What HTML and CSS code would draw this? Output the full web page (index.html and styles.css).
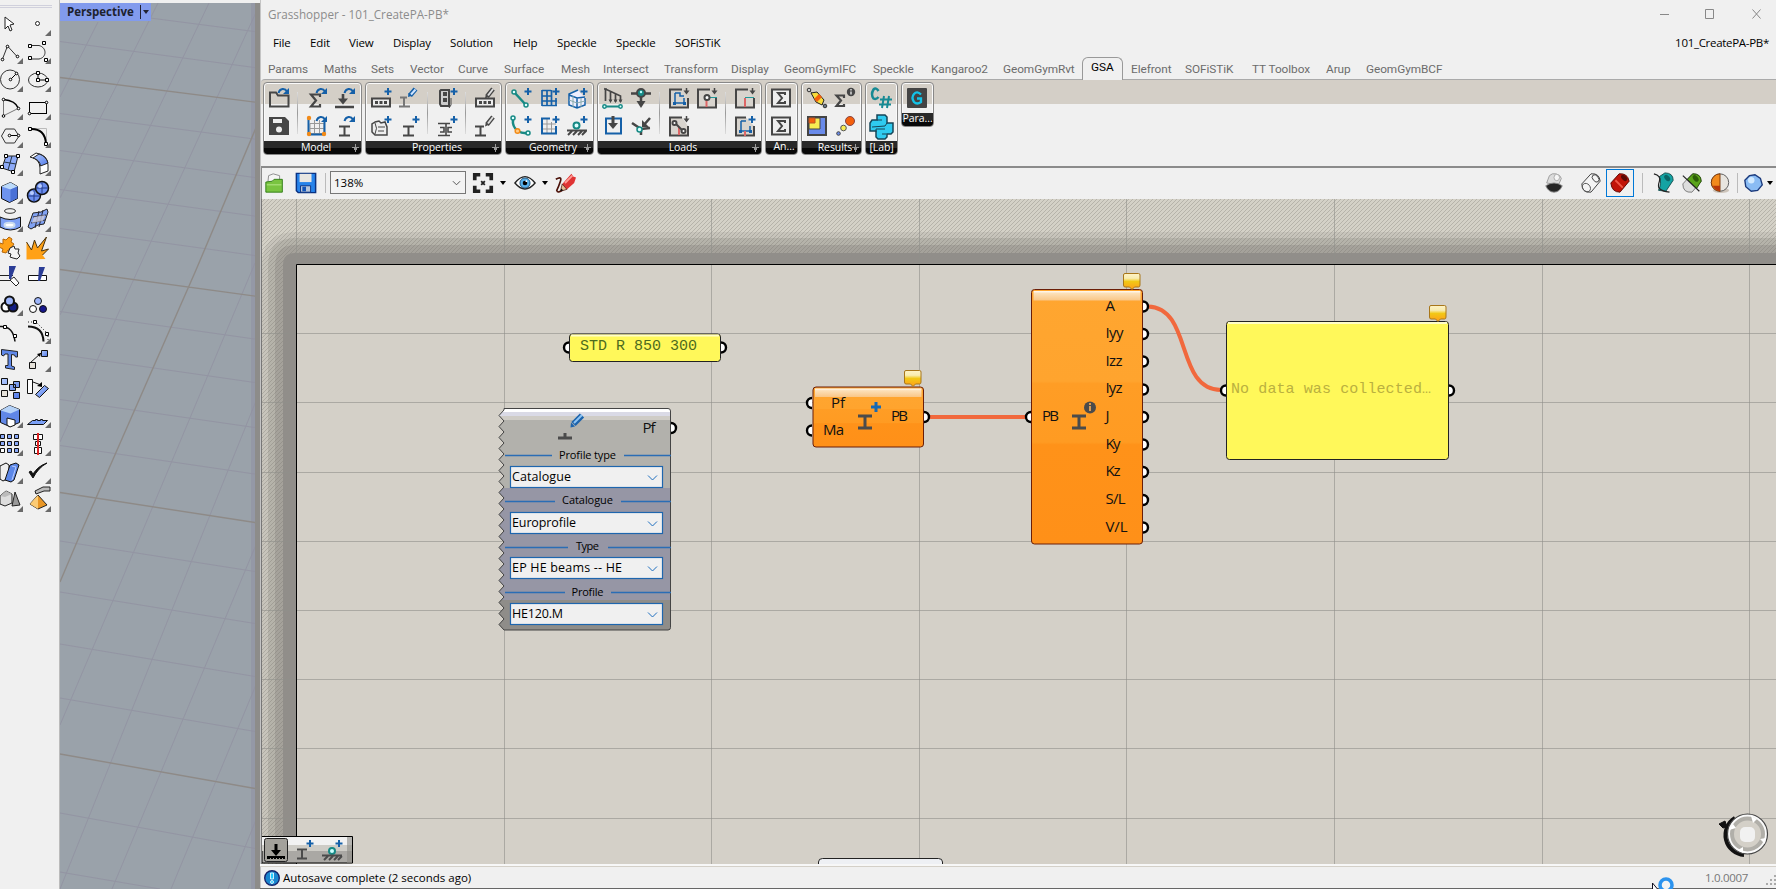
FILE: index.html
```html
<!DOCTYPE html>
<html lang="en">
<head>
<meta charset="utf-8">
<title>Grasshopper - 101_CreatePA-PB*</title>
<link rel="stylesheet" href="styles.css">
</head>
<body>
<svg class="defs" width="0" height="0">
  <defs>
    <symbol id="plus" viewBox="0 0 28 28" overflow="visible"><path d="M21 4v7M17.500 7.500h7" stroke="#1560a8" stroke-width="2" fill="none"/></symbol>
    <symbol id="redo" viewBox="0 0 28 28" overflow="visible"><path d="M13.500 9C15 4 20 4 22 7.500" stroke="#1560a8" stroke-width="2" fill="none"/><path d="M24 4v6h-6z" fill="#1560a8"/></symbol>
    <symbol id="beam" viewBox="0 0 28 28" overflow="visible"><path d="M8 14.500h11M8 23.500h11M13.500 14v9" stroke="#464646" stroke-width="2" fill="none"/></symbol>
    <symbol id="pen" viewBox="0 0 28 28" overflow="visible"><path d="M16 12.500l6-7.500" stroke="#464646" stroke-width="4.500"/><path d="M17 11.500l5-6.500" stroke="#ddd" stroke-width="2"/><path d="M14 14.500l.8-3.500 2.500 2z" fill="#464646"/></symbol>
    <symbol id="tri" viewBox="0 0 28 28"><path d="M27 21v6h-6z" fill="#6a6a6a"/></symbol>
    <symbol id="down" viewBox="0 0 28 28" overflow="visible"><path d="M21.500 4v4" stroke="#464646" stroke-width="1.500"/><path d="M18.500 6.500h6l-3 4z" fill="#464646"/></symbol>
    <linearGradient id="blue" x1="0" y1="0" x2="1" y2="1"><stop offset="0" stop-color="#b4ccff"/><stop offset="1" stop-color="#4f78e8"/></linearGradient>
    <linearGradient id="gold" x1="0" y1="0" x2="0" y2="1"><stop offset="0" stop-color="#fff3c4"/><stop offset=".3" stop-color="#f8ecb0"/><stop offset=".5" stop-color="#f2c816"/><stop offset="1" stop-color="#ff9d1a"/></linearGradient>
    <linearGradient id="orange" x1="0" y1="0" x2="0" y2="1"><stop offset="0" stop-color="#ffa630"/><stop offset=".36" stop-color="#ffa42e"/><stop offset=".37" stop-color="#ff9d25"/><stop offset=".6" stop-color="#ff9b22"/><stop offset=".61" stop-color="#ff9219"/><stop offset="1" stop-color="#ff9018"/></linearGradient>
    <linearGradient id="gloss" x1="0" y1="0" x2="0" y2="1"><stop offset="0" stop-color="#fff" stop-opacity=".95"/><stop offset=".25" stop-color="#fce0b8"/><stop offset="1" stop-color="#f9c687"/></linearGradient>
  </defs>
</svg>
<div class="desktop">
  <aside class="toolbox">
    <div class="grab"></div>
    <div class="tools">
      <svg viewBox="0 0 28 28"><path d="M9 8v12l3-3 2 5 2-1-2-5 4-1z" fill="#fff" stroke="#222"/></svg>
      <svg viewBox="0 0 28 28"><circle cx="13.500" cy="14.500" r="2" fill="#fff" stroke="#222"/><use href="#tri"/></svg>
      <svg viewBox="0 0 28 28"><path d="M6.500 22l5-13 10 11" fill="none" stroke="#333"/><g fill="#fff" stroke="#000"><circle cx="6.500" cy="22.500" r="1.300"/><circle cx="11.500" cy="9.500" r="1.300"/><circle cx="21.500" cy="19.500" r="1.300"/></g><use href="#tri"/></svg>
      <svg viewBox="0 0 28 28"><path d="M6 8.500h9c8 2 8 12 0 13.500H6" fill="none" stroke="#333"/><g fill="#fff" stroke="#000"><path d="M4.500 7.500h3v3h-3zM4.500 19.500h3v3h-3zM18.500 4.500h3v3h-3zM20.500 21.500h3v3h-3z"/></g><use href="#tri"/></svg>
      <svg viewBox="0 0 28 28"><circle cx="14" cy="14.500" r="9.500" fill="none" stroke="#333"/><path d="M14.500 14.500l6-6" stroke="#000"/><g fill="#fff" stroke="#000"><circle cx="14.500" cy="14.500" r="1.300"/><circle cx="20.500" cy="8.500" r="1.300"/></g><use href="#tri"/></svg>
      <svg viewBox="0 0 28 28"><ellipse cx="14" cy="15" rx="9.500" ry="7" fill="none" stroke="#333"/><path d="M14 8v7h8" stroke="#000" fill="none"/><g fill="#fff" stroke="#000"><path d="M12.500 6.500h3v3h-3zM12.500 13.500h3v3h-3zM21.500 13.500h3v3h-3z"/></g><use href="#tri"/></svg>
      <svg viewBox="0 0 28 28"><path d="M7.500 22V6.500" stroke="#777"/><path d="M7.500 6.500q12 1 15 9" fill="none" stroke="#000" stroke-width="1.500"/><path d="M22 15.500l-14 7" stroke="#777"/><g fill="#fff" stroke="#000"><circle cx="7.500" cy="6.500" r="1.300"/><circle cx="22.500" cy="15.500" r="1.300"/><circle cx="7.500" cy="23" r="1.300"/></g><use href="#tri"/></svg>
      <svg viewBox="0 0 28 28"><rect x="5.500" y="9.500" width="17" height="11" fill="none" stroke="#000"/><g fill="#fff" stroke="#000"><circle cx="22.500" cy="9.500" r="1.300"/><circle cx="5.500" cy="20.500" r="1.300"/></g><use href="#tri"/></svg>
      <svg viewBox="0 0 28 28"><path d="M9.500 8h9l4.500 7-4.500 7h-9L5.500 15z" fill="none" stroke="#333"/><path d="M13 14.500h9" stroke="#000"/><g fill="#fff" stroke="#000"><circle cx="13.500" cy="14.500" r="1.300"/><circle cx="22.500" cy="14.500" r="1.300"/></g><use href="#tri"/></svg>
      <svg viewBox="0 0 28 28"><path d="M6 7.500h16.500v15" fill="none" stroke="#bbb"/><path d="M6 8q15-1 16 15" fill="none" stroke="#000" stroke-width="2"/><path d="M4.500 6.500h3v3h-3zM20.500 21.500h3v3h-3z" fill="#fff" stroke="#000"/><use href="#tri"/></svg>
      <svg viewBox="0 0 28 28"><path d="M10 7h12l-4 16-12-4z" fill="#8daaf8" stroke="#222"/><path d="M8 13l12 2M16 7l-4 14" stroke="#234"/><path d="M8.500 5.500h3v3h-3zM20.500 5.500h3v3h-3zM4.500 16.500h3v3h-3zM15.500 21.500h3v3h-3z" fill="#fff" stroke="#000"/><use href="#tri"/></svg>
      <svg viewBox="0 0 28 28"><path d="M6 8l6-4q12 2 12 12v6l-8 3v-6q0-9-10-11z" fill="#fff" stroke="#222"/><path d="M9 9q7 2 7.500 8l7.500-3q-2-7-9-9z" fill="url(#blue)" stroke="#222"/><use href="#tri"/></svg>
      <svg viewBox="0 0 28 28"><path d="M5.500 9.500l9-4 7 4v12l-8 4-8-4z" fill="#6e93ee" stroke="#111"/><path d="M5.500 9.500l9-4 7 4-7 3z" fill="#bcdafa"/><path d="M14.500 12.500v12.500l7-4V9.500z" fill="#4970d6"/><use href="#tri"/></svg>
      <svg viewBox="0 0 28 28"><g fill="#6b8ef0" stroke="#111" stroke-width="1.500"><circle cx="10" cy="18.500" r="6.500"/><circle cx="18" cy="11" r="6.500"/></g><path d="M4 19h12M10 12v13M12 11h12M18 5v12" stroke="#223a88" fill="none"/><circle cx="16" cy="9" r="2" fill="#b8ccff"/><circle cx="8" cy="16" r="2" fill="#b8ccff"/><use href="#tri"/></svg>
      <svg viewBox="0 0 28 28"><ellipse cx="14" cy="6" rx="5.500" ry="2.300" fill="none" stroke="#333"/><path d="M4 12q10 5 20.500 0v10q-10 6-20.500 0z" fill="#7fa2f5" stroke="#111"/><ellipse cx="13.500" cy="20" rx="5" ry="2.300" fill="#fff" stroke="#cde" stroke-width="2"/><use href="#tri"/></svg>
      <svg viewBox="0 0 28 28"><path d="M9 8l8-1 6-3 1 3-4 12-6 1-7 4-3-2z" fill="#80a1f2" stroke="#222"/><path d="M9 12l13-2M7 18l14-3M15 6l-4 17M19 5l-4 17" stroke="#223"/><path d="M10 12l11-2-2 6-11 2z" fill="#ccd" opacity=".8"/><use href="#tri"/></svg>
      <svg viewBox="0 0 28 28"><path d="M7 6l3 1 3-3 3 2-1 3 3 2-3 4 2 3-5-1-2 3-4-1 1-3-4-2 1-4 3 1z" fill="#ffa116" stroke="#b5670a"/><path d="M14 15l4-2 1 3 4 0-1 4 2 3-3 3-4-1-3-1 1-3-3-1z" fill="#f4f4f4" stroke="#222"/></svg>
      <svg viewBox="0 0 28 28"><path d="M2.500 26.500V9l5 8 3-10 3 8 9-11-5 14 7-2-6 6 3 4z" fill="#ffa116"/><path d="M2.500 9l5 8 3-10 3 8 9-11-5 14 7-2-6 6" fill="none" stroke="#46300c"/></svg>
      <svg viewBox="0 0 28 28"><path d="M4 14.500h13M4 19.500h10M14 19l4-3 5 6-3 3z" fill="#fff" stroke="#222"/><path d="M13 5h7l-5 13h-2z" fill="#2b3d96"/></svg>
      <svg viewBox="0 0 28 28"><path d="M4.500 14.500h18v5h-18z" fill="#fff" stroke="#111"/><path d="M15 6h6l-5 14h-2z" fill="#2b3d96"/></svg>
      <svg viewBox="0 0 28 28"><g stroke="#111" stroke-width="2"><circle cx="10" cy="18" r="4.500" fill="#fff"/><circle cx="17" cy="18" r="4.500" fill="#121e82"/><circle cx="13.500" cy="12" r="4.500" fill="#9db5fa"/></g><use href="#tri"/></svg>
      <svg viewBox="0 0 28 28"><g stroke="#111"><circle cx="9" cy="20" r="3.500" fill="#fff"/><circle cx="19" cy="20" r="3.500" fill="#16168c"/><circle cx="14" cy="12" r="3.500" fill="#9db5fa"/></g></svg>
      <svg viewBox="0 0 28 28"><path d="M4 9.500q13-1 15 15" fill="none" stroke="#111" stroke-width="1.500"/><path d="M7.500 8.500h3v3h-3zM17.500 17.500h3v3h-3z" fill="#fff" stroke="#000"/></svg>
      <svg viewBox="0 0 28 28"><path d="M4 9.500q15 0 15.500 15" fill="none" stroke="#111" stroke-width="2"/><path d="M4 5h8l12 12v8" fill="none" stroke="#222" stroke-dasharray="1 2"/><path d="M9.500 3.500h3v3h-3zM21.500 15.500h3v3h-3z" fill="#fff" stroke="#000"/><use href="#tri"/></svg>
      <svg viewBox="0 0 28 28"><path d="M5.500 4.500l16 2v5.500h-2l-1-2-3-.5V21l3 1v2.500l-9-1.500v-2.500l2.500 0V9l-3 0-1.500 2-2-1z" fill="#6088e8" stroke="#222"/></svg>
      <svg viewBox="0 0 28 28"><path d="M6 18l11-10" stroke="#111"/><path d="M17 8l-4 1 3 3z"/><path d="M5.500 17.500h6v6h-6z" fill="#e6e2da" stroke="#111"/><path d="M17.500 5.500h6v6h-6z" fill="url(#blue)" stroke="#111"/><use href="#tri"/></svg>
      <svg viewBox="0 0 28 28"><g fill="url(#blue)" stroke="#111"><path d="M5.500 5.500h6v6h-6zM17.500 8.500h6v6h-6zM13.500 11.500h6v6h-6zM17.500 19.500h6v6h-6z"/></g><path d="M5.500 17.500h6v6h-6z" fill="#e6e2da" stroke="#111"/></svg>
      <svg viewBox="0 0 28 28"><path d="M3.500 6.500h5v14h-5z" fill="#fff" stroke="#111"/><path d="M9 9l8 3" stroke="#111"/><path d="M18 9v5l-5-1z"/><path d="M20.500 12.500l4 3-9 9-4-3z" fill="url(#blue)" stroke="#111"/></svg>
      <svg viewBox="0 0 28 28"><path d="M4.500 9.500l9-5 10 4v13l-10 4-9-4z" fill="#6087e6" stroke="#111"/><path d="M4.500 9.500l9-5 10 4-9 4z" fill="#b5d2f7"/><path d="M11 17l8 2v5l-5 2-3-2z" fill="#fff" stroke="#111"/><use href="#tri"/></svg>
      <svg viewBox="0 0 28 28"><path d="M3.500 23.500l5-4h3v-1h2v1h3v-1h2v1h5l-4 4z" fill="#7ba0f6" stroke="#111"/><use href="#tri"/></svg>
      <svg viewBox="0 0 28 28"><g fill="#89a8f7" stroke="#111"><path d="M4.500 5.500h4v4h-4zM11.500 5.500h4v4h-4zM18.500 5.500h4v4h-4zM4.500 12.500h4v4h-4zM11.500 12.500h4v4h-4zM18.500 12.500h4v4h-4zM11.500 19.500h4v4h-4zM18.500 19.500h4v4h-4z"/><path d="M4.500 19.500h4v4h-4z" fill="#fff"/></g><use href="#tri"/></svg>
      <svg viewBox="0 0 28 28"><path d="M9.500 5.500h9v5h-9zM11.500 12.500h5v4h-5zM10.500 18.500h7v6h-7z" fill="#fff" stroke="#111"/><path d="M14 4v22" stroke="#d22" stroke-width="2"/><use href="#tri"/></svg>
      <svg viewBox="0 0 28 28"><path d="M4 9l6-3 3 2v13l-6 3-3-2z" fill="#eee" stroke="#111"/><path d="M14 8l6-2 3 2-5 15-3 2-6-2z" fill="#5c87e8" stroke="#111"/><path d="M16 9l4 1-4 13" fill="none" stroke="#b8ccff"/><use href="#tri"/></svg>
      <svg viewBox="0 0 28 28"><path d="M5 15l4 6Q14 11 23 6q-9 3-14 11l-2-3z" fill="#111" stroke="#111"/><use href="#tri"/></svg>
      <svg viewBox="0 0 28 28"><path d="M4 11l6-5 6 3v9l-7 3-5-2z" fill="#ddd" stroke="#222"/><path d="M19 7l5 13-8 1z" fill="#999" stroke="#222"/><path d="M4 11l6-5 6 3-7 3z" fill="#bbb"/><use href="#tri"/></svg>
      <svg viewBox="0 0 28 28"><path d="M14 10l9 10-9 4-8-5z" fill="#e89626" stroke="#222"/><path d="M14 10l-8 9 8 5z" fill="#fbcb75"/><path d="M11 6l8-4h7v4h-6l-8 3z" fill="#bbb" stroke="#222"/><use href="#tri"/></svg>
    </div>
  </aside>

  <section class="viewport">
    <svg class="plane" viewBox="60 3 195 886">
      <g class="minor">
        <path d="M150 18L258 32M60 41.500L258 68M60 113.500L258 139.500M60 150.500L258 178M60 189.500L258 216.500M60 228.500L258 256M60 311.500L258 339.500M60 354.500L258 383M60 399.500L258 428M60 445.500L258 474.500M60 541L258 572M60 592L258 624M60 644L258 677M60 698L258 732M60 813L258 849M60 872L160 889"/>
        <path d="M98 22L60 97M158 3L60 198M209 3L60 315M258 8L138 270L60 442M255 263L143 530L60 725M258 396L204 530L60 889M258 540L112 889M258 680L171 889M258 815L228 889"/>
      </g>
      <path class="major" d="M60 77.500L258 102.500M60 269.500L258 296.500M60 492.500L258 523M60 754L258 789M258 123L196 270L82 530L60 582"/>
    </svg>
    <div class="view-label"><span>Perspective</span><i></i></div>
  </section>

  <main class="window">
    <header class="titlebar">
      <span>Grasshopper - 101_CreatePA-PB*</span>
      <svg viewBox="0 0 104 12"><path d="M1 6.500h9M46.500 1.500h8v9h-8zM93.500 1.500l8 9M101.500 1.500l-8 9" fill="none" stroke="#888"/></svg>
    </header>
    <nav class="menu">
      <span>File</span><span>Edit</span><span>View</span><span>Display</span><span>Solution</span><span>Help</span><span>Speckle</span><span>Speckle</span><span>SOFiSTiK</span><span class="doc">101_CreatePA-PB*</span>
    </nav>
    <nav class="tabs">
      <span>Params</span><span>Maths</span><span>Sets</span><span>Vector</span><span>Curve</span><span>Surface</span><span>Mesh</span><span>Intersect</span><span>Transform</span><span>Display</span><span>GeomGymIFC</span><span>Speckle</span><span>Kangaroo2</span><span>GeomGymRvt</span><span class="active">GSA</span><span>Elefront</span><span>SOFiSTiK</span><span>TT Toolbox</span><span>Arup</span><span>GeomGymBCF</span>
    </nav>

    <section class="ribbon">
      <div class="panel">
        <div class="icons">
          <div class="group one">
            <svg viewBox="0 0 28 28"><path d="M5 22.500V8.500h6l2 3h10.500v11H5z" fill="none" stroke="#464646" stroke-width="2"/><use href="#redo"/></svg>
            <svg viewBox="0 0 28 28"><path d="M4 5h16l4 4v14H4z" fill="#464646"/><path d="M8 7h9v4H8z" fill="#eee"/><circle cx="14" cy="17.500" r="3" fill="#eee"/></svg>
          </div>
          <i class="sep"></i>
          <div class="group two">
            <svg viewBox="0 0 28 28"><path d="M17 13v-2.500H8l5 6-5 6h9V20" fill="none" stroke="#464646" stroke-width="2.200"/><use href="#redo"/></svg>
            <svg viewBox="0 0 28 28"><path d="M4 23h19M12 10v7" stroke="#464646" stroke-width="2.600"/><path d="M7 14.500h10l-5 6z" fill="#464646"/><use href="#redo"/></svg>
            <svg viewBox="0 0 28 28"><path d="M7 11.500h14v10H7zM7 16.500h14M11.500 8v15M16.500 8v15" fill="none" stroke="#999"/><path d="M5.500 6v17M21.500 10v12M5 22.500h17" stroke="#1560a8" stroke-width="2"/><g fill="#f28a17"><circle cx="6" cy="6" r="2.200"/><circle cx="6" cy="22" r="2.200"/><circle cx="21" cy="22" r="2.200"/></g><use href="#redo"/></svg>
            <svg viewBox="0 0 28 28"><use href="#beam"/><use href="#redo"/></svg>
          </div>
        </div>
        <footer><b>Model</b><em></em></footer>
      </div>
      <div class="panel">
        <div class="icons">
          <div class="group two">
            <svg viewBox="0 0 28 28"><path d="M5 14.500h18v8H5z" fill="#eee" stroke="#464646" stroke-width="2"/><path d="M8 17h3v3H8zM12.500 17h3v3h-3zM17 17h3v3h-3z" fill="#464646"/><use href="#plus"/></svg>
            <svg viewBox="0 0 28 28"><path d="M5 13.500h7M9 14v8M4 22.500h11" stroke="#777" stroke-width="2"/><path d="M15 11.500L20.500 5" stroke="#1560a8" stroke-width="5"/><path d="M16 10.500L20.500 5.500" stroke="#cfe4ff" stroke-width="2"/><path d="M13 13l.5-4 3 3z" fill="#1560a8"/></svg>
            <svg viewBox="0 0 28 28"><path d="M8 10l-3 2v8l3 3h12v-8l-2-5-4 1-2-2z" fill="#eee" stroke="#464646" stroke-width="1.500"/><path d="M8 11q3 5 0 11M11 15h7M11 19h6" fill="none" stroke="#464646"/><use href="#plus"/></svg>
            <svg viewBox="0 0 28 28"><use href="#beam"/><use href="#plus"/></svg>
          </div>
          <i class="sep"></i>
          <div class="group one">
            <svg viewBox="0 0 28 28"><path d="M8 6h8v16H8l-1-2V7z" fill="#ccc" stroke="#464646" stroke-width="2"/><path d="M10 8h4v4h-4zM10 14h4v4h-4z" fill="#464646"/><path d="M18 14v7l-2 3" stroke="#464646" fill="none"/><use href="#plus"/></svg>
            <svg viewBox="0 0 28 28"><path d="M5 11.500h12M5 23.500h12M7 15.500h4v4.500H7M19 15.500h-4v4.500h4" stroke="#464646" stroke-width="1.600" fill="none"/><path d="M13 12v11" stroke="#464646" stroke-width="1.600"/><use href="#plus"/></svg>
          </div>
          <i class="sep"></i>
          <div class="group one">
            <svg viewBox="0 0 28 28"><path d="M5 14.500h18v8H5z" fill="#eee" stroke="#464646" stroke-width="2"/><path d="M8 17h3v3H8zM12.500 17h3v3h-3zM17 17h3v3h-3z" fill="#464646"/><use href="#pen"/></svg>
            <svg viewBox="0 0 28 28"><path d="M4 14.500h9M4 23.500h11M9.500 14v9" stroke="#464646" stroke-width="2"/><use href="#pen"/></svg>
          </div>
        </div>
        <footer><b>Properties</b><em></em></footer>
      </div>
      <div class="panel">
        <div class="icons">
          <div class="group three">
            <svg viewBox="0 0 28 28"><path d="M7 8l12 13" stroke="#178a85" stroke-width="2.500"/><g fill="#dff" stroke="#178a85" stroke-width="1.500"><circle cx="7" cy="8" r="2"/><circle cx="19" cy="21" r="2"/></g><use href="#plus"/></svg>
            <svg viewBox="0 0 28 28"><path d="M7 6.500h9M7 12h9M7 17h15M7 21.500h15M7 6v16M12 6v16M16.500 6v16M21 14v8" stroke="#1560a8" stroke-width="1.700" fill="none"/><use href="#plus"/></svg>
            <svg viewBox="0 0 28 28"><path d="M15 6l-9 4v11l8 3 8-3v-7M6 11l8 3 8-1M14 14v10" fill="#eef" stroke="#1560a8" stroke-width="1.500"/><path d="M6 16l8 3 8-2M10 12v11M18 14v9" stroke="#8aa" fill="none"/><use href="#plus"/></svg>
            <svg viewBox="0 0 28 28"><path d="M6 7q-1 8 5 12 4 3 12 2" fill="none" stroke="#178a85" stroke-width="2.500"/><g fill="#dff" stroke="#178a85" stroke-width="1.500"><circle cx="6" cy="6" r="2"/><circle cx="21" cy="21" r="2"/></g><circle cx="10.500" cy="19" r="2.300" fill="#fc8" stroke="#f28a17" stroke-width="1.500"/><use href="#plus"/></svg>
            <svg viewBox="0 0 28 28"><path d="M8 12h13M8 17h13M12 6v16M16.500 10v12" stroke="#999"/><path d="M15 6.500H7v15h14V14" stroke="#1560a8" stroke-width="2" fill="none"/><use href="#plus"/></svg>
            <svg viewBox="0 0 28 28"><path d="M4 18.500h20M9 19l-4 4M14 19l-4 4M19 19l-4 4M23 19l-4 4" stroke="#464646" stroke-width="2"/><circle cx="13.500" cy="13.500" r="3" fill="#dff" stroke="#178a85" stroke-width="2"/><use href="#plus"/></svg>
          </div>
        </div>
        <footer><b>Geometry</b><em></em></footer>
      </div>
      <div class="panel">
        <div class="icons">
          <div class="group two">
            <svg viewBox="0 0 28 28"><path d="M6.500 17V5L21.500 12v6M11.500 8v9M16.500 10v8M5 5h3" fill="none" stroke="#464646" stroke-width="1.700"/><path d="M9.500 15.500h4l-2 3.500zM14.500 15.500h4l-2 3.500zM19.500 15.500h4l-2 3.500z" fill="#464646"/><path d="M6 22.500h15" stroke="#178a85" stroke-width="2"/><g fill="#dff" stroke="#178a85" stroke-width="1.500"><circle cx="5.500" cy="22.500" r="1.700"/><circle cx="21.500" cy="22.500" r="1.700"/></g></svg>
            <svg viewBox="0 0 28 28"><path d="M4 9.500h20M14 11v8" stroke="#464646" stroke-width="2.500"/><path d="M9.500 17h9l-4.500 7z" fill="#464646"/><circle cx="14" cy="9" r="4" fill="#178a85" stroke="#464646" stroke-width="2"/><circle cx="14" cy="8" r="1.200" fill="#bff"/></svg>
            <svg viewBox="0 0 28 28"><path d="M7 6.500h15v15H7z" fill="none" stroke="#1560a8" stroke-width="2"/><path d="M14 4v8" stroke="#464646" stroke-width="3"/><path d="M9 11h10l-5 6z" fill="#464646"/></svg>
            <svg viewBox="0 0 28 28"><path d="M5 11l9 6 9-1M14 17v6M16 14l7-8" stroke="#464646" stroke-width="2.500" fill="none"/><path d="M15 8v7h7z" fill="#464646"/><circle cx="12.500" cy="17.500" r="2.500" fill="#dff" stroke="#178a85" stroke-width="1.500"/></svg>
          </div>
          <i class="sep"></i>
          <div class="group two">
            <svg viewBox="0 0 28 28"><path d="M17 5.500H5v18h18V14" stroke="#464646" stroke-width="2" fill="#d8d4ce"/><path d="M10 9v10h9v-5M10 9h5v3h4" fill="none" stroke="#1560a8" stroke-width="1.500"/><path d="M8 18h3v3H8zM18 18h3v3h-3z" fill="#1560a8"/><use href="#down"/></svg>
            <svg viewBox="0 0 28 28"><path d="M17 5.500H5v18h18V14" stroke="#464646" stroke-width="2" fill="#d8d4ce"/><path d="M13.500 15v8" stroke="#d66" stroke-width="2"/><path d="M15 13.500h9" stroke="#299"/><circle cx="14" cy="13.500" r="2.500" fill="#fff" stroke="#464646" stroke-width="2"/><use href="#down"/></svg>
            <svg viewBox="0 0 28 28"><path d="M17 5.500H5v18h18V14" stroke="#464646" stroke-width="2" fill="#d8d4ce"/><path d="M14 15v8" stroke="#d66" stroke-width="2"/><path d="M10 11l8 8" stroke="#464646" stroke-width="2"/><g fill="#fff" stroke="#464646" stroke-width="2"><circle cx="9.500" cy="11" r="2"/><circle cx="18.500" cy="19" r="2"/></g><use href="#down"/></svg>
          </div>
          <i class="sep"></i>
          <div class="group one">
            <svg viewBox="0 0 28 28"><path d="M17 5.500H5v18h18V14" stroke="#464646" stroke-width="2" fill="#d8d4ce"/><path d="M14 14v9" stroke="#d66" stroke-width="2"/><path d="M14 13.500h9" stroke="#299"/><use href="#down"/></svg>
            <svg viewBox="0 0 28 28"><path d="M15 5.500H5v18h18V14" stroke="#464646" stroke-width="2" fill="#d8d4ce"/><path d="M10 9v10h9v-5M10 9h5" fill="none" stroke="#1560a8" stroke-width="1.500"/><path d="M14 19v5" stroke="#d66" stroke-width="2"/><path d="M8 18h3v3H8zM18 18h3v3h-3z" fill="#1560a8"/><use href="#plus"/></svg>
          </div>
        </div>
        <footer><b>Loads</b><em></em></footer>
      </div>
      <div class="panel">
        <div class="icons">
          <div class="group one">
            <svg viewBox="0 0 28 28"><path d="M5 5.500h18v17H5z" fill="#eee" stroke="#464646" stroke-width="2"/><path d="M18 11V9h-7l4 5-4 5h7v-2" fill="none" stroke="#464646" stroke-width="2"/></svg>
            <svg viewBox="0 0 28 28"><path d="M5 5.500h18v17H5z" fill="#eee" stroke="#464646" stroke-width="2"/><path d="M18 11V9h-7l4 5-4 5h7v-2" fill="none" stroke="#464646" stroke-width="2"/></svg>
          </div>
        </div>
        <footer class="cut"><b>An…</b></footer>
      </div>
      <div class="panel">
        <div class="icons">
          <div class="group two">
            <svg viewBox="0 0 28 28"><path d="M6 6l16 17" stroke="#555"/><path d="M8 9l6-1 7 8-2 5-6-3z" fill="#f7dc3c" stroke="#222"/><path d="M11 15l5-5 3 3-5 5z" fill="#f4600c"/><circle cx="6" cy="6" r="1.800" fill="#ccc" stroke="#333"/><circle cx="22" cy="22" r="1.800" fill="#678" stroke="#333"/></svg>
            <svg viewBox="0 0 28 28"><path d="M13 14v-2.500H5.500l4.500 5-4.500 5.500H13V20" fill="none" stroke="#464646" stroke-width="2.200"/><circle cx="20" cy="8" r="4.200" fill="#464646"/><path d="M20 7.500v3M20 5v1.500" stroke="#ddd" stroke-width="1.500"/></svg>
            <svg viewBox="0 0 28 28"><path d="M5 5h18v18H5z" fill="#6a8bea" stroke="#444" stroke-width="2"/><path d="M6 6h11v11H6z" fill="#f7ec52" stroke="#444"/><path d="M6 6h6v5H6z" fill="#f4600c" stroke="#b52"/></svg>
            <svg viewBox="0 0 28 28"><circle cx="19" cy="9" r="4.500" fill="#f4600c" stroke="#844"/><circle cx="12.500" cy="16" r="2.800" fill="#f7ec52" stroke="#555"/><circle cx="7.500" cy="21.500" r="1.800" fill="#6a8bea" stroke="#444"/></svg>
          </div>
        </div>
        <footer><b>Results</b><em></em></footer>
      </div>
      <div class="panel">
        <div class="icons">
          <div class="group one">
            <svg viewBox="0 0 28 28"><path d="M11.500 7Q9 3 6.500 5.500q-3 5 0 9Q9 16 11.500 13" fill="none" stroke="#178a94" stroke-width="2.500"/><path d="M17 12l-2 12M22 12l-2 12M13 15.500h12M12 20.500h12" stroke="#178a94" stroke-width="2"/></svg>
            <svg viewBox="0 0 28 28"><path d="M10 3h8l2 2v6h6v9l-2 2h-4v3l-2 2h-7l-2-2v-6H3v-8l2-3h5z" fill="#2fcbf0" stroke="#164658" stroke-width="1.500"/><path d="M10 8h5M15 22h4M5 15l13-1 2-3M9 20v-3h9" fill="none" stroke="#164658"/></svg>
          </div>
        </div>
        <footer class="fill"><b>[Lab]</b></footer>
      </div>
      <div class="panel short">
        <div class="icons">
          <div class="group one">
            <svg viewBox="0 0 28 28"><rect x="4" y="4" width="20" height="20" rx="1" fill="#444"/><path d="M18 10.500Q14 6.500 11 10t0 8q3 3 7 0v-3.500h-4" fill="none" stroke="#13c3e8" stroke-width="2.300"/></svg>
          </div>
        </div>
        <footer class="cut"><b>Para…</b></footer>
      </div>
    </section>

    <section class="toolbar">
      <svg class="ic" viewBox="0 0 24 24"><path d="M5 4l5-2 7 2v10H4z" fill="#f5f5f5" stroke="#888"/><path d="M2 11l7-1 2-2h9v14H2z" fill="#79c440" stroke="#2c7a14"/><path d="M3 14h16" stroke="#b9ea8c"/></svg>
      <svg class="ic" viewBox="0 0 24 24"><path d="M1.500 1.500h21v21h-19l-2-2z" fill="#2783ea" stroke="#0a3282" stroke-width="1.600"/><path d="M5 2h13v9H5z" fill="#e8e6e2"/><path d="M6 15h11v7H6z" fill="#b8c6da" stroke="#0a3282"/><path d="M8 16h4v5H8z" fill="#1254b8"/></svg>
      <i class="bar"></i>
      <div class="combo"><span>138%</span><svg viewBox="0 0 10 6"><path d="M1 1l4 4 4-4" fill="none" stroke="#444"/></svg></div>
      <svg class="ic fit" viewBox="0 0 24 24"><path d="M3 9V3h6M15 3h6v6M21 15v6h-6M9 21H3v-6" fill="none" stroke="#222" stroke-width="4"/><path d="M10 10l4 4M14 10l-4 4" stroke="#222" stroke-width="2"/></svg>
      <i class="drop"></i>
      <svg class="ic" viewBox="0 0 24 24"><path d="M1 12q11-14 22 0-11 13-22 0z" fill="#fff" stroke="#222" stroke-width="1.500"/><circle cx="12" cy="12" r="5.500" fill="#58b0ea" stroke="#1a4a72"/><circle cx="12" cy="12" r="2.500"/><circle cx="13.500" cy="10" r="1" fill="#fff"/></svg>
      <i class="drop"></i>
      <svg class="ic brush" viewBox="0 0 24 24"><path d="M2 8q7-4 5 2t-4 10q1 4 7-1" fill="none" stroke="#4a1008" stroke-width="1.800"/><path d="M9 13l10-11 2 3 3 1-2 6-8 7z" fill="#e03434"/><path d="M12 12l8-8" stroke="#ff9d96" stroke-width="2"/><path d="M7 21l2-8 5 6z" fill="#e6bf96" stroke="#4a1008" stroke-width=".8"/><path d="M7 21l1-3 2 2z"/></svg>
      <div class="right">
        <svg class="ic" viewBox="0 0 24 24"><path d="M4 12L7 4q3-3 7-2 5 1 6 5l-3 7z" fill="#dcdcdc" stroke="#999"/><ellipse cx="15" cy="6" rx="3" ry="3.500" fill="#f6f6f6" stroke="#aaa"/><path d="M3 15q9-6 18 0-3 7-9 7t-9-7z" fill="#262626" stroke="#888"/></svg>
        <svg class="ic" viewBox="0 0 24 24"><path d="M2 13L12 2q9-1 10 8L12 22Q2 23 2 13z" fill="#f4f4f4" stroke="#333"/><ellipse cx="7" cy="17" rx="4" ry="5" fill="none" stroke="#555" transform="rotate(-40 7 17)"/><ellipse cx="17" cy="7" rx="3" ry="4.500" fill="none" stroke="#444" transform="rotate(-40 17 7)"/></svg>
        <span class="pick"><svg class="ic" viewBox="0 0 24 24"><path d="M2 12L11 2q9-1 11 8L12 22q-9 0-10-10z" fill="#c11408" stroke="#5a0400"/><ellipse cx="16.500" cy="6.500" rx="2.500" ry="4" fill="#5a0905" transform="rotate(-45 16.500 6.500)"/><path d="M7 9l8 8" stroke="#f05a48" stroke-width="2"/></svg></span>
        <i class="bar"></i>
        <svg class="ic" viewBox="0 0 24 24"><path d="M7 5l6-4q9 0 9 8l-8 12-8-1q4-8 1-15z" fill="#14a3a3" stroke="#124c4c"/><ellipse cx="15.500" cy="6.500" rx="2.500" ry="4" fill="#0b6667" transform="rotate(-40 15.500 6.500)"/><path d="M1 2q8 2 6 8t0 8q3 3 11 4" fill="none" stroke="#222" stroke-width="1.300"/></svg>
        <svg class="ic" viewBox="0 0 24 24"><path d="M2 13L12 2q9-1 10 8L12 22Q2 23 2 13z" fill="#ddd" stroke="#777"/><path d="M7 8l6-6q9 0 9 8l-5 8z" fill="#5aa31a" stroke="#234a08"/><ellipse cx="16" cy="7" rx="2.500" ry="4" fill="#2c5d08" transform="rotate(-40 16 7)"/><path d="M2 4l18 17" stroke="#222" stroke-width="1.300"/></svg>
        <svg class="ic" viewBox="0 0 24 24"><ellipse cx="13" cy="20" rx="9" ry="3" fill="#cdc4ba"/><circle cx="12" cy="11.500" r="9.500" fill="#e8e5df" stroke="#555"/><path d="M12 2a9.500 9.500 0 0 0 0 19z" fill="#f28a1c" stroke="#7c3404"/><path d="M4 15q3 5 8 6v-6z" fill="#b8370a"/></svg>
        <i class="bar"></i>
        <svg class="ic" viewBox="0 0 24 24"><path d="M7 4l6-1 6 4 2 7-5 6-7 1-6-5-1-7z" fill="#8abcf4" stroke="#1b3a7c" stroke-width="1.500"/><circle cx="9" cy="9" r="3.500" fill="#d2eaff"/></svg>
        <i class="drop"></i>
      </div>
    </section>

    <section class="canvas">
      <svg class="board" viewBox="262 199 1514 665">
        <defs>
          <pattern id="hatch" width="4" height="4" patternUnits="userSpaceOnUse"><path d="M-1 1l2-2M0 4l4-4M3 5l2-2" stroke="#77756c" stroke-opacity=".32" stroke-width="1"/></pattern>
          <g id="gripR"><path d="M0-5a5 5 0 0 1 0 10z" fill="#fff"/><path d="M0-5a5 5 0 0 1 0 10" fill="none" stroke="#000" stroke-width="2.400"/></g>
          <g id="gripL"><path d="M0-5a5 5 0 0 0 0 10z" fill="#fff"/><path d="M0-5a5 5 0 0 0 0 10" fill="none" stroke="#000" stroke-width="2.400"/></g>
          <g id="balloon"><path d="M2 .5h13.500q1.500 0 1.500 1.500v10q0 2-1.500 2h-4l-2.500 2.500L6.500 14H2Q.5 14 .5 12V2Q.5.500 2 .5z" fill="url(#gold)" stroke="#a8761a"/></g>
          <path id="torn" d="M504 408.500h164q2.500 0 2.500 2.500v216.500q0 2.500-2.500 2.500H504l-5-5.500 5-5.500-5-5.500 5-5.500-5-5.500 5-5.500-5-5.500 5-5.500-5-5.500 5-5.500-5-5.500 5-5.500-5-5.500 5-5.500-5-5.500 5-5.500-5-5.500 5-5.500-5-5.500 5-5.500-5-5.500 5-5.500-5-5.500 5-5.500-5-5.500 5-5.500-5-5.500 5-5.500-5-5.500 5-5.500-5-5.500 5-5.500-5-5.500 5-5.500-5-5.500 5-5.500-5-5.500 5-5.500-5-5.500 5-5.500z"/>
          <clipPath id="zig"><use href="#torn"/></clipPath>
        </defs>
        <path d="M262 199h1514v66H297v599h-35z" fill="#d4d1c7"/>
        <path d="M262 199h1514v66H297v599h-35z" fill="url(#hatch)"/>
        <g fill="#77756f">
          <path d="M262 864V266q0-34 34-34h1480v33H297v599z" opacity=".14"/>
          <path d="M268 864V266q0-28 28-28h1480v27H297v599z" opacity=".22"/>
          <path d="M275 864V266q0-21 20-21h1481v20H297v599z" opacity=".26"/>
          <path d="M283 864V265q0-12 12-12h1481v12H297v599z" fill="#8f8d89" opacity=".95"/>
        </g>
        <path class="grid" d="M296.500 199v65M504.500 199v665M711.500 199v665M919.500 199v665M1126.500 199v665M1334.500 199v665M1542.500 199v665M1749.500 199v665M262 333.500h1514M262 402.500h1514M262 472.500h1514M262 541.500h1514M262 610.500h1514M262 679.500h1514M262 748.500h1514M262 818.500h1514"/>
        <path d="M296.500 864V264.500H1776" fill="none" stroke="#000"/>

        <g class="wire"><path d="M929 417H1026M1148 306.500C1193 308 1175 390 1221 390"/></g>

        <use href="#gripL" x="569" y="347.500"/><use href="#gripR" x="721" y="347.500"/>
        <rect x="569.500" y="334" width="151" height="27.500" rx="3" fill="#fff85a" stroke="#222"/>
        <path d="M571 335.500h148" stroke="#fffdc8" stroke-width="2"/>
        <text class="mono" x="580" y="349.500" textLength="117">STD R 850 300</text>

        <use href="#gripR" x="671" y="428"/>
        <g clip-path="url(#zig)">
          <path d="M498 408h174v223H498z" fill="#b2b1ac"/>
          <path d="M498 408h174v4H498z" fill="#fff"/><path d="M498 412h174v4H498z" fill="#dadae6"/><path d="M498 416h174v4H498z" fill="#cfccc6"/>
          <path d="M498 488h174v112H498z" fill="#9696a5"/><path d="M498 600h174v31H498z" fill="#8f8d89"/>
        </g>
        <use href="#torn" fill="none" stroke="#444"/>
        <path d="M558 438h14M565 433v5" stroke="#4b4b4b" stroke-width="3"/>
        <path d="M573.500 424l8.500-8.500" stroke="#1c63ac" stroke-width="6"/><path d="M574 423l8-8" stroke="#8ec4f4" stroke-width="2"/><path d="M570.500 427.500l.5-5 4 4z" fill="#1c63ac"/>
        <text class="label" x="642.500" y="432.500" textLength="13">Pf</text>
        <path class="rule" d="M505 455.500h47M624 455.500h47M505 501.500h50M621 501.500h50M505 547.500h63M608 547.500h63M505 592.500h60M611 592.500h60"/>
        <g class="fields"><rect x="510.500" y="466.500" width="152" height="21"/><rect x="510.500" y="512.500" width="152" height="21"/><rect x="510.500" y="557.500" width="152" height="21"/><rect x="510.500" y="603.500" width="152" height="21"/></g>
        <path d="M648 475.500l4.500 4.500 4.500-4.500M648 521.500l4.500 4.500 4.500-4.500M648 566.500l4.500 4.500 4.500-4.500M648 612.500l4.500 4.500 4.500-4.500" fill="none" stroke="#1e6fc0"/>
        <g class="cap"><text x="559" y="459" textLength="57">Profile type</text><text x="562" y="504" textLength="51">Catalogue</text><text x="576" y="550" textLength="23">Type</text><text x="571.500" y="596" textLength="32">Profile</text></g>
        <g class="value"><text x="512" y="481" textLength="59">Catalogue</text><text x="512" y="526.500" textLength="64">Europrofile</text><text x="512" y="572" textLength="110">EP HE beams -- HE</text><text x="512" y="618" textLength="51">HE120.M</text></g>

        <use href="#gripL" x="812" y="403"/><use href="#gripL" x="812" y="430.500"/><use href="#gripR" x="924" y="417"/>
        <rect x="813" y="387" width="110.500" height="60" rx="3" fill="url(#orange)" stroke="#6a1e08"/>
        <path d="M815 388.500h106.500v8.500H815z" fill="url(#gloss)"/>
        <use href="#balloon" x="904" y="370"/>
        <path d="M858 416h14M858 428h14M865 416v12" stroke="#4b4b4b" stroke-width="3"/><path d="M876 402v10M871 407h10" stroke="#1769b5" stroke-width="3"/>
        <text class="label" x="831" y="407.500" textLength="14">Pf</text><text class="label" x="823" y="435" textLength="21">Ma</text><text class="label" x="891" y="421" textLength="17">PB</text>

        <use href="#gripL" x="1031" y="417"/>
        <use href="#gripR" x="1143" y="306.500"/><use href="#gripR" x="1143" y="334"/><use href="#gripR" x="1143" y="361.500"/><use href="#gripR" x="1143" y="389.500"/><use href="#gripR" x="1143" y="417"/><use href="#gripR" x="1143" y="444.500"/><use href="#gripR" x="1143" y="472"/><use href="#gripR" x="1143" y="500"/><use href="#gripR" x="1143" y="527.500"/>
        <rect x="1031.500" y="289.500" width="111" height="254.500" rx="3" fill="url(#orange)" stroke="#6a1e08"/>
        <path d="M1033.500 291h107v9.500h-107z" fill="url(#gloss)"/>
        <use href="#balloon" x="1123" y="273"/>
        <path d="M1072 416h14M1072 428h14M1079 416v12" stroke="#4b4b4b" stroke-width="3"/><circle cx="1090" cy="407.500" r="6" fill="#4b4b4b"/><path d="M1090 406v5M1090 403v2" stroke="#e8a455" stroke-width="1.800"/>
        <text class="label" x="1042" y="421" textLength="17">PB</text>
        <g class="label"><text x="1105.500" y="310.500">A</text><text x="1105.500" y="338" textLength="18">Iyy</text><text x="1105.500" y="365.500" textLength="17">Izz</text><text x="1105.500" y="393" textLength="17">Iyz</text><text x="1105.500" y="421">J</text><text x="1105.500" y="448.500" textLength="15">Ky</text><text x="1105.500" y="476" textLength="15">Kz</text><text x="1105.500" y="504" textLength="20">S/L</text><text x="1105.500" y="531.500" textLength="22">V/L</text></g>

        <use href="#gripL" x="1226" y="390.500"/><use href="#gripR" x="1449" y="390.500"/>
        <rect x="1226.500" y="321.500" width="222" height="138" rx="3" fill="#fff85a" stroke="#222"/>
        <path d="M1228 323h219" stroke="#fffdc8" stroke-width="2"/>
        <use href="#balloon" x="1429" y="305"/>
        <text class="mono dim" x="1231" y="392.500" textLength="200">No data was collected…</text>

        <path d="M818.500 866v-4q0-3.500 4-3.500h116q4 0 4 3.500v4" fill="#eef0f4" stroke="#222"/>

        <g>
          <path d="M262 836.500h90.500v26.500H262z" fill="#aaa8a4" stroke="#000"/>
          <path d="M262 837h90v8h-90z" fill="#f2f2f2"/><path d="M262 845h90v6h-90z" fill="#ceccc6"/><path d="M347 837h5v26h-5z" fill="#8c8a86" opacity=".6"/>
          <rect x="264.500" y="838.500" width="23" height="23" rx="2" fill="#a3a19b" stroke="#222"/><path d="M276 844v7" stroke="#000" stroke-width="3"/><path d="M271 850h10l-5 6zM267 856h18v3h-2v-1h-1v1h-2v-1h-1v1h-2v-1h-1v1h-2v-1h-1v1h-2v-1h-1v1h-3z"/>
          <path d="M297 849.500h10M297 858.500h10M302 850v9" stroke="#4b4b4b" stroke-width="2"/><path d="M310 840v7M306.500 843.500h7M339 840v7M335.500 843.500h7" stroke="#1560a8" stroke-width="2"/>
          <circle cx="332" cy="851" r="3" fill="#cff" stroke="#178a85" stroke-width="2"/><path d="M322 855.500h20M328 856l-4 4M333 856l-4 4M338 856l-4 4M342 856l-4 4" stroke="#4b4b4b" stroke-width="2"/>
        </g>

        <g fill="none">
          <path d="M1735 818a20 20 0 0 0 9 37" stroke="#111" stroke-width="4"/><path d="M1719 824l6-3 2 6-4 1z" fill="#111" stroke="#111"/>
          <circle cx="1747.500" cy="834" r="20" fill="#fafafa" stroke="#444" stroke-width="1.200"/><circle cx="1747.500" cy="834" r="15.500" fill="#d4d0c8" stroke="#b1afa9" stroke-width="4"/>
          <path d="M1751 816l6 3-4 4zM1766 838l-6 1 5 5zM1743 853l-5-3 5-3zM1729 830l7-2-3-4z" fill="#fff"/>
          <rect x="1740" y="827" width="15" height="15" rx="5" fill="#f1f1f1"/>
        </g>
      </svg>
    </section>

    <footer class="status">
      <svg viewBox="0 0 16 16"><circle cx="8" cy="8" r="7.300" fill="#1a86cf" stroke="#16246c" stroke-width="1.400"/><path d="M6.500 3h3v6h-3z" fill="#2cf" stroke="#fff" stroke-width=".8"/><circle cx="8" cy="12" r="1.500" fill="#2cf" stroke="#fff" stroke-width=".8"/></svg>
      <span>Autosave complete (2 seconds ago)</span>
      <span class="ver">1.0.0007</span>
      <svg class="dots" viewBox="0 0 10 12"><path d="M8 0h2v2H8zM4 4h2v2H4zM8 4h2v2H8zM0 8h2v2H0zM4 8h2v2H4zM8 8h2v2H8z" fill="#aaa"/></svg>
    </footer>
  </main>
</div>
<svg class="pointer" viewBox="0 0 24 12"><path d="M1.500 12V6l5 6" fill="#fff" stroke="#112"/><circle cx="15" cy="8" r="6" fill="#f4f4f4" stroke="#2c93ee" stroke-width="3.500"/></svg>
</body>
</html>
```
FILE: styles.css
```css
* { box-sizing: border-box; }
body { margin: 0; background: #f0f0f0; font: 12px/16px "Open Sans", "Noto Sans", sans-serif; color: #000; overflow: hidden; }
svg { display: block; }
.defs { position: absolute; }
.desktop { display: grid; grid-template-columns: 60px 200px 1516px; height: 889px; overflow: hidden; }

.toolbox { background: #f0f0f0; border-right: 1px solid #bbb; overflow: hidden; }
.grab { height: 3px; margin: 5px 7px 1px 0; border-top: 1px solid #d0d0dc; border-bottom: 1px solid #d0d0dc; }
.tools { display: grid; grid-template-columns: 28px 28px; grid-auto-rows: 28px; margin-left: -4px; }
.tools svg { width: 28px; height: 28px; }

.viewport { position: relative; margin-top: 3px; background: linear-gradient(90deg, #9aa2aa 191px, #9498a6 191px); border-right: 5px solid #8d8c8a; }
.plane { width: 195px; height: 886px; }
.plane path { fill: none; }
.minor { stroke: #9292a2; stroke-width: 1; opacity: .8; }
.major { stroke: #8e8a87; stroke-width: 1.4; }
.view-label { position: absolute; left: 0; top: 0; display: flex; align-items: center; width: 91px; height: 18px; padding-left: 7px; background: #829bed; font-weight: 700; color: #1d222e; }
.view-label span { width: 73px; font-size: 11.500px; }
.view-label i { width: 11px; height: 14px; border-left: 1px solid #223; position: relative; }
.view-label i::after { content: ""; position: absolute; left: 2px; top: 5px; border: 3.500px solid transparent; border-top: 4px solid #223; }

.window { display: grid; grid-template-rows: 28px 31px 20px 87px 33px 665px 25px; background: linear-gradient(90deg, #c4c4c4 1px, #f0f0f0 1px); min-width: 0; }
.titlebar { display: flex; justify-content: space-between; align-items: center; padding: 0 13px 0 8px; color: #8c8c8c; font-size: 11.700px; }
.titlebar svg { width: 104px; height: 12px; }
.menu { display: grid; grid-template-columns: 37px 39px 44px 57px 63px 44px 59px 59px 60px 1fr; padding: 7px 7px 0 13px; font-size: 11.500px; letter-spacing: -.15px; white-space: nowrap; }
.doc { text-align: right; letter-spacing: -.3px; }
.tabs { display: grid; grid-template-columns: 56px 47px 39px 48px 46px 57px 42px 61px 67px 53px 89px 58px 72px 79px 49px 54px 67px 74px 40px 90px; padding-left: 8px; font: 11.800px/20px Roboto, sans-serif; letter-spacing: -.05px; color: #6c6c6c; white-space: nowrap; }
.tabs .active { width: 41px; height: 23px; margin-top: -2px; padding-left: 8px; border: 1px solid #999; border-bottom: 0; border-radius: 6px 6px 0 0; background: #f0f0f0; color: #000; line-height: 19px; position: relative; }

.ribbon { display: flex; align-items: flex-start; gap: 3px; padding: 2px 3px 2px 2px; margin-left: 1px; border-top: 1px solid #aaa; border-radius: 4px 0 0 0; background: linear-gradient(#d4cfc7 24px, #f0f0f0 24px); }
.panel { height: 73px; border: 1px solid #888; border-radius: 4px; box-shadow: inset 0 0 0 1px #fafafa; overflow: hidden; }
.icons { display: flex; height: 58px; padding: 1px; }
.group { display: grid; grid-template-rows: 28px 28px; align-content: start; }
.group svg { width: 28px; height: 28px; }
.one { grid-template-columns: 28px; }
.two { grid-template-columns: 28px 28px; }
.three { grid-template-columns: 28px 28px 28px; }
.sep { width: 1px; height: 42px; margin: 8px 5px 0 4px; background: linear-gradient(#ddd, #999, #ddd); }
.panel footer { display: flex; align-items: center; justify-content: center; position: relative; height: 14px; padding-left: 7px; background: linear-gradient(#292929 50%, #080808 50%); color: #fff; font-size: 10.500px; line-height: 13px; letter-spacing: -.1px; }
.panel footer.fill { padding: 0; }
.panel footer.cut { padding: 0 0 3px 5px; }
.panel.short footer.cut { padding: 0 0 3px; }
.panel b { font-weight: 400; margin-top: -1px; }
.panel em { position: absolute; right: 2px; top: 3px; width: 7px; height: 8px; background: linear-gradient(#999, #999) 3px 0 / 1px 8px no-repeat, linear-gradient(#999, #999) 0 3px / 7px 1px no-repeat, linear-gradient(#999, #999) 2px 4px / 3px 2px no-repeat; }
.panel:nth-child(1) { width: 99px; }
.panel:nth-child(2) { width: 137px; }
.panel:nth-child(3) { width: 89px; }
.panel:nth-child(4) { width: 165px; }
.panel:nth-child(5), .panel:nth-child(7), .panel:nth-child(8) { width: 33px; }
.panel:nth-child(6) { width: 61px; }
.short { height: 45px; }
.short .icons { height: 30px; }
.short .group { grid-template-rows: 28px; }

.toolbar { display: flex; align-items: center; margin-left: 1px; padding: 0 0 2px 2px; border-top: 2px solid #8b8b8b; border-left: 1px solid #8b8b8b; }
.ic { width: 22px; height: 24px; flex: none; }
.toolbar .ic:nth-child(2) { margin-left: 9px; }
.bar { width: 1px; height: 20px; background: #bbb; }
.toolbar > .bar { margin-left: 8px; }
.combo { display: flex; justify-content: space-between; align-items: center; width: 136px; height: 23px; margin: 0 6px 0 4px; padding: 0 4px 0 3px; border: 1px solid #777; background: #f3f3f3; font-size: 11.500px; }
.combo svg { width: 9px; height: 6px; }
.drop { border: 3px solid transparent; border-top: 4px solid #000; border-bottom: 0; margin: 0 8px 0 6px; }
.toolbar > .brush { margin-left: -2px; }
.right { display: flex; align-items: center; margin-left: auto; }
.right > .ic { margin-right: 6px; }
.right > .ic:nth-child(2) { margin-right: 4px; }
.right .bar { margin: 0 10px 0 8px; }
.right .ic + .bar { margin: 0 5px 0 0; }
.right > .ic:nth-last-child(2) { margin-right: 2px; }
.right .drop { margin: 0 3px 0 0; }
.pick { display: flex; align-items: center; justify-content: center; width: 28px; height: 28px; border: 1px solid #0078d7; }

.canvas { margin-left: 1px; border-left: 1px solid #777; background: #d4d0c8; }
.board { width: 1514px; height: 665px; }
.grid { stroke: #8f8f8a; stroke-opacity: .6; fill: none; }
.wire { fill: none; stroke: #f1683d; stroke-width: 4; }
.mono { font: 15px "Liberation Mono", monospace; fill: #4d6a1e; }
.dim { fill: #bab03f; }
.label { font: 15px "Open Sans", "Noto Sans", sans-serif; fill: #111; }
.cap { font-size: 11px; }
.value { font-size: 12.500px; }
.rule { stroke: #2a6db5; stroke-width: 1.500; }
.fields { fill: #f0f0f0; stroke: #1e66ae; stroke-width: 1.200; }

.status { display: flex; align-items: center; border-top: 2px solid #f7f7f7; box-shadow: inset 0 1px #d4d0c8; border-bottom: 1px solid #666; padding: 2px 0 0 4px; }
.status svg { width: 16px; height: 16px; margin-right: 3px; }
.status span { font-size: 11.500px; }
.status .ver { margin-left: auto; margin-right: 18px; color: #777; letter-spacing: -.3px; }
.status .dots { width: 10px; height: 12px; margin: 6px 0 0; }
.pointer { position: absolute; left: 1651px; top: 877px; width: 24px; height: 12px; }
```
